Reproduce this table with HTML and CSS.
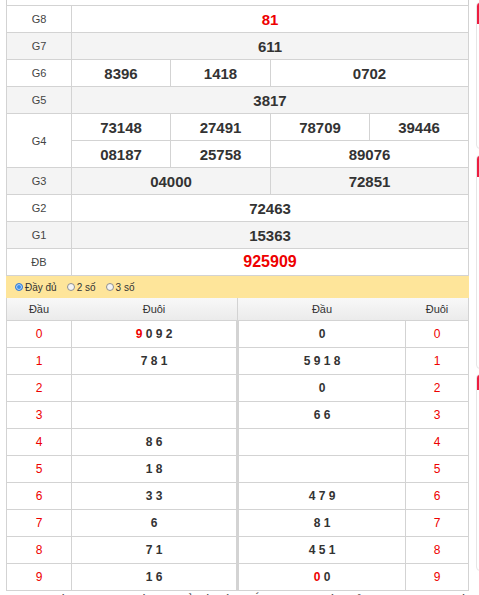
FILE: index.html
```html
<!DOCTYPE html>
<html lang="vi">
<head>
<meta charset="utf-8">
<title>Kết quả xổ số</title>
<link rel="stylesheet" href="styles.css">
</head>
<body>
<div class="page">
  <main class="board">
    <div class="board-top"></div>
    <div class="results">
      <div class="lbl">G8</div><div class="num red span4">81</div>
      <div class="lbl alt">G7</div><div class="num alt span4">611</div>
      <div class="lbl">G6</div><div class="num">8396</div><div class="num">1418</div><div class="num span2">0702</div>
      <div class="lbl alt">G5</div><div class="num alt span4">3817</div>
      <div class="lbl rows2">G4</div><div class="num">73148</div><div class="num">27491</div><div class="num">78709</div><div class="num">39446</div>
      <div class="num">08187</div><div class="num">25758</div><div class="num span2">89076</div>
      <div class="lbl alt">G3</div><div class="num alt span2">04000</div><div class="num alt span2">72851</div>
      <div class="lbl">G2</div><div class="num span4">72463</div>
      <div class="lbl alt">G1</div><div class="num alt span4">15363</div>
      <div class="lbl">ĐB</div><div class="num red big span4">925909</div>
    </div>
    <div class="opts">
      <label class="opt"><span class="radio on"></span>Đầy đủ</label>
      <label class="opt"><span class="radio"></span>2 số</label>
      <label class="opt"><span class="radio"></span>3 số</label>
    </div>
    <div class="lt-head">
      <div>Đầu</div><div>Đuôi</div><div class="sep"></div><div>Đầu</div><div>Đuôi</div>
    </div>
    <div class="lt">
      <div class="d">0</div><div class="v"><span class="red">9</span> 0 9 2</div><div class="sep"></div><div class="v">0</div><div class="d">0</div>
      <div class="d">1</div><div class="v">7 8 1</div><div class="sep"></div><div class="v">5 9 1 8</div><div class="d">1</div>
      <div class="d">2</div><div class="v"></div><div class="sep"></div><div class="v">0</div><div class="d">2</div>
      <div class="d">3</div><div class="v"></div><div class="sep"></div><div class="v">6 6</div><div class="d">3</div>
      <div class="d">4</div><div class="v">8 6</div><div class="sep"></div><div class="v"></div><div class="d">4</div>
      <div class="d">5</div><div class="v">1 8</div><div class="sep"></div><div class="v"></div><div class="d">5</div>
      <div class="d">6</div><div class="v">3 3</div><div class="sep"></div><div class="v">4 7 9</div><div class="d">6</div>
      <div class="d">7</div><div class="v">6</div><div class="sep"></div><div class="v">8 1</div><div class="d">7</div>
      <div class="d">8</div><div class="v">7 1</div><div class="sep"></div><div class="v">4 5 1</div><div class="d">8</div>
      <div class="d">9</div><div class="v">1 6</div><div class="sep"></div><div class="v"><span class="red">0</span> 0</div><div class="d">9</div>
    </div>
    <p class="note">Xem thống kê lô tô, kết quả xổ số miền Bắc hôm nay đầy đủ và chính xác nhất</p>
  </main>
  <aside class="side">
    <section class="card c1"><div class="card-h"></div></section>
    <section class="card c2"><div class="card-h"></div></section>
    <section class="card c3"><div class="card-h"></div></section>
  </aside>
</div>
</body>
</html>
```
FILE: styles.css
```css
html, body {
  margin: 0;
  padding: 0;
  overflow: hidden;
  background: #fff;
}
body {
  font-family: "Liberation Sans", Arial, sans-serif;
  color: #333;
}
.page {
  display: flex;
  align-items: flex-start;
  width: 800px;
}
.board {
  width: 463px;
  margin-left: 6px;
  flex: none;
}
.board-top {
  height: 5px;
  border-left: 1px solid #cfcfcf;
  border-right: 1px solid #cfcfcf;
}
.results {
  display: grid;
  grid-template-columns: 64px 98px 99px 98px 98px;
  grid-auto-rows: 26px;
  gap: 1px;
  padding: 1px;
  background: #d3d3d3;
}
.results > div {
  background: #fff;
  display: flex;
  align-items: center;
  justify-content: center;
}
.results > .alt {
  background: #f4f4f4;
}
.lbl {
  font-size: 11px;
  color: #444;
}
.rows2 {
  grid-row: span 2;
}
.num {
  font-size: 15px;
  font-weight: bold;
  color: #333;
}
.span2 { grid-column: span 2; }
.span4 { grid-column: span 4; }
.red { color: #ee0000; }
.num.big { font-size: 16px; }

.opts {
  height: 22px;
  background: #fee59a;
  display: flex;
  align-items: center;
  padding-left: 9px;
  gap: 10px;
  font-size: 10px;
  color: #333;
}
.opt {
  display: flex;
  align-items: center;
  gap: 2px;
}
.radio {
  width: 6px;
  height: 6px;
  border-radius: 50%;
  border: 1px solid #8f8f8f;
  background: #f4f4f4;
  box-sizing: content-box;
}
.radio.on {
  border-color: #3c7fd4;
  background: #3b8eea;
  box-shadow: inset 0 0 0 1px #bcd8f8;
}

.lt-head {
  display: grid;
  grid-template-columns: 64px 164px 1px 166px 62px;
  column-gap: 1px;
  height: 22px;
  border-left: 1px solid #d3d3d3;
  border-right: 1px solid #d3d3d3;
  background: linear-gradient(#f8f8f8, #ebebeb);
  font-size: 11px;
  color: #333;
}
.lt-head > div {
  display: flex;
  align-items: center;
  justify-content: center;
}
.lt-head > .sep {
  background: #d3d3d3;
}
.lt {
  display: grid;
  grid-template-columns: 64px 164px 1px 166px 62px;
  grid-auto-rows: 26px;
  gap: 1px;
  padding: 1px;
  background: #d3d3d3;
}
.lt > div {
  background: #fff;
  display: flex;
  align-items: center;
  justify-content: center;
  white-space: pre;
}
.lt > .sep {
  background: #d3d3d3;
}
.lt .d {
  font-size: 12px;
  color: #ee0000;
}
.lt .v {
  font-size: 12px;
  font-weight: bold;
  color: #333;
}
.note {
  margin: 0;
  padding-left: 10px;
  font-size: 13px;
  line-height: 18px;
  color: #333;
  white-space: nowrap;
}

.side {
  margin-left: 7px;
  width: 300px;
  flex: none;
  display: flex;
  flex-direction: column;
}
.card {
  border: 1px solid #e6e6e6;
  border-radius: 4px;
  box-sizing: border-box;
  overflow: hidden;
}
.card-h {
  height: 22px;
  margin: -1px -1px 0 -1px;
  background: #ec1c40;
}
.c1 { margin-top: 2px; height: 147px; }
.c2 { margin-top: 6px; height: 214px; }
.c3 { margin-top: 5px; height: 197px; }
.c3 .card-h { height: 15px; margin-top: 0; }
```
